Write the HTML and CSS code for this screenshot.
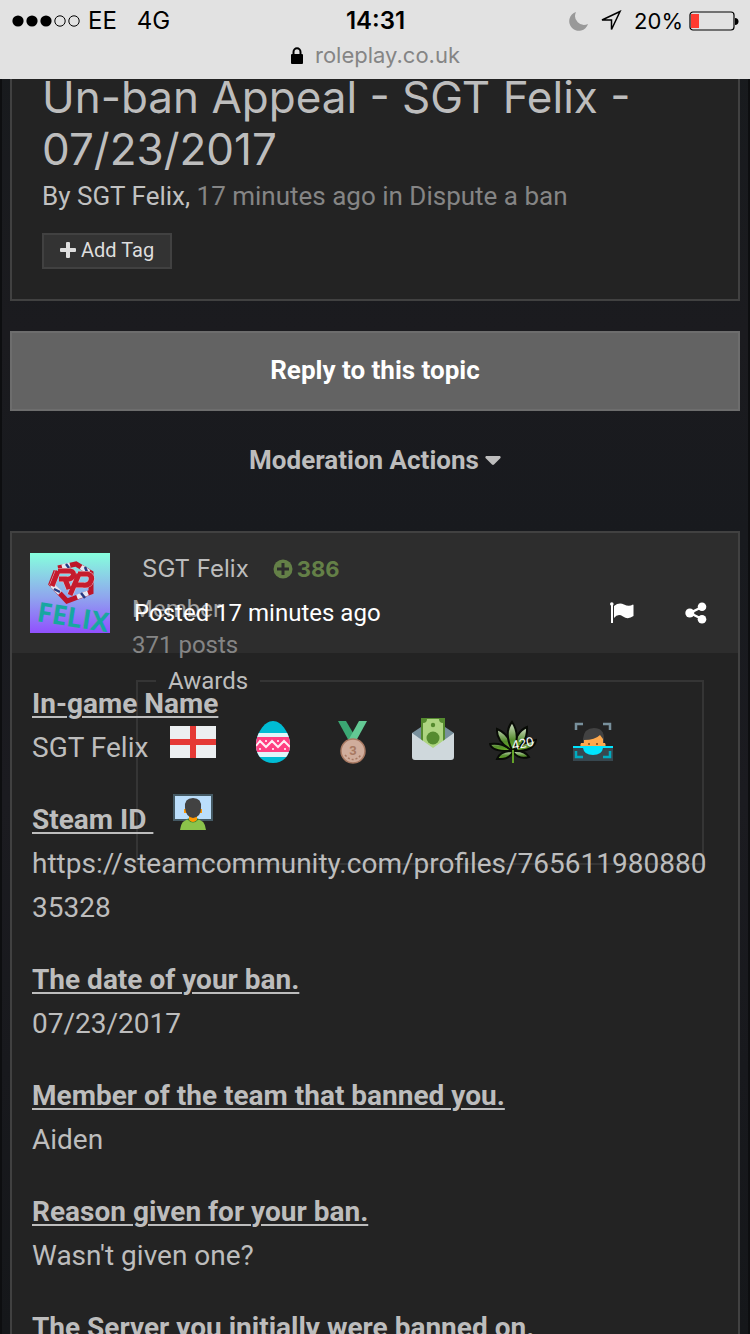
FILE: index.html
```html
<!DOCTYPE html>
<html lang="en">
<head>
    <meta charset="UTF-8">
    <meta name="viewport" content="width=device-width, initial-scale=1.0">
    <title>Un-ban Appeal - SGT Felix - 07/23/2017</title>
    <link rel="stylesheet" href="styles.css">
</head>
<body>
    <header class="phone-bar">
        <div class="status">
            <div class="status-left">
                <svg width="68" height="14" viewBox="0 0 68 14" aria-hidden="true">
                    <circle cx="6" cy="7" r="5.6"/>
                    <circle cx="20" cy="7" r="5.6"/>
                    <circle cx="34" cy="7" r="5.6"/>
                    <g fill="none" stroke="#000" stroke-width="1">
                        <circle cx="48" cy="7" r="5.2"/>
                        <circle cx="62" cy="7" r="5.2"/>
                    </g>
                </svg>
                <span class="carrier">EE</span>
                <span>4G</span>
            </div>
            <div class="time">14:31</div>
            <div class="status-right">
                <svg class="moon" width="20" height="20" viewBox="0 0 20 20" aria-hidden="true">
                    <path d="M7 1A9.6 9.6 0 1 0 19 13A9 9 0 0 1 7 1Z" fill="#999"/>
                </svg>
                <svg class="arrow" width="22" height="22" viewBox="0 0 22 22" aria-hidden="true">
                    <path d="M20 1.5 2 10H11.5V19.5Z" fill="none" stroke="#000" stroke-width="1.5"/>
                </svg>
                <span class="percent">20%</span>
                <svg class="battery" width="50" height="20" viewBox="0 0 50 20" aria-hidden="true">
                    <rect x="1" y="1" width="44" height="18" rx="3" fill="none" stroke="#000" stroke-width="1.2"/>
                    <rect x="2" y="3" width="8" height="14" fill="#ff3b30"/>
                    <path d="M46 7a3 3 0 0 1 0 7Z"/>
                </svg>
            </div>
        </div>
        <div class="address">
            <svg width="12" height="17" viewBox="0 0 12 17" aria-hidden="true">
                <rect y="7" width="12" height="10" rx="1"/>
                <path d="M2.5 8V5a3.5 3.8 0 0 1 7 0V8" fill="none" stroke="#000" stroke-width="2"/>
            </svg>
            <span>roleplay.co.uk</span>
        </div>
    </header>

    <main>
        <section class="card topic">
            <h1>Un-ban Appeal - SGT Felix - 07/23/2017</h1>
            <p class="byline"><a href="#" class="author">By SGT Felix,</a> 17 minutes ago in <a href="#">Dispute a ban</a></p>
            <button type="button" class="add-tag">
                <svg width="16" height="16" viewBox="0 0 16 16" aria-hidden="true">
                    <path d="M6 1q0-1 1-1h2q1 0 1 1v5h5q1 0 1 1v2q0 1-1 1h-5v5q0 1-1 1H7q-1 0-1-1v-5H1q-1 0-1-1V7q0-1 1-1h5Z" fill="currentColor"/>
                </svg>
                Add Tag
            </button>
        </section>

        <button type="button" class="reply">Reply to this topic</button>
        <button type="button" class="moderation">
            Moderation Actions
            <svg width="16" height="9" viewBox="0 0 16 9" aria-hidden="true"><path d="M1 0H15q1 1 .5 2L9 8.5q-1 .8-2 0L.5 2Q0 1 1 0Z" fill="currentColor"/></svg>
        </button>

        <article class="card post">
            <header class="post-header">
                <a href="#" class="avatar" aria-label="SGT Felix">
                    <svg width="80" height="80" viewBox="0 0 80 80" aria-hidden="true">
                        <defs>
                            <linearGradient id="sky" x2="0" y2="1">
                                <stop stop-color="#86ffdd"/>
                                <stop offset=".55" stop-color="#8fa6ee"/>
                                <stop offset="1" stop-color="#9150ff"/>
                            </linearGradient>
                        </defs>
                        <rect width="80" height="80" fill="url(#sky)"/>
                        <path d="M28 15 46 11 61 20 61 39 37 48 21 31 26 18" fill="none" stroke="#bd1529" stroke-width="5"/>
                        <path d="M32 14l8-2M51 14l8 5M22 32l8 8M47 44l11-4" stroke="#e4e8f3" stroke-width="5"/>
                        <path d="M36 11l3 4M55 14l2 5M24 36l6 3M51 40l4 5" stroke="#263982" stroke-width="2.5"/>
                        <g fill="none" stroke-linejoin="round">
                            <path id="letters" d="M28 18H40Q45 19 43 23T36 26H29M28 18 22 33M35 26 39 36M48 21H58Q63 23 61 28T53 32H46M49 21 40 42" stroke="#dec8d5" stroke-width="6"/>
                            <path d="M28 18H40Q45 19 43 23T36 26H29M28 18 22 33M35 26 39 36M48 21H58Q63 23 61 28T53 32H46M49 21 40 42" stroke="#c51b2d" stroke-width="5"/>
                        </g>
                        <text x="6" y="68" transform="rotate(9 6 68)" class="avatar-word">FELIX</text>
                    </svg>
                </a>
                <div class="author-info">
                    <h2><a href="#">SGT Felix</a></h2>
                    <span class="reputation">
                        <svg width="20" height="20" viewBox="0 0 20 20" aria-hidden="true"><circle cx="10" cy="10" r="9.5" fill="#648047"/><path d="M10 4v12M4 10h12" stroke="#2d2d2d" stroke-width="3"/></svg>
                        386
                    </span>
                    <div class="rank">Member</div>
                    <div class="count">371 posts</div>
                </div>
                <a href="#" class="posted">Posted 17 minutes ago</a>
                <a href="#" class="report" aria-label="Report post">
                    <svg width="24" height="22" viewBox="0 0 24 22" aria-hidden="true" fill="#fff">
                        <circle cx="1.8" cy="2" r="1.8"/>
                        <path d="M1 2h2v19H1ZM4 4Q9 0 14 2.5T23 2.5L23.5 3V14Q18 18 13 14.5T4 16Z"/>
                    </svg>
                </a>
                <a href="#" class="share" aria-label="Share post">
                    <svg width="22" height="22" viewBox="0 0 22 22" aria-hidden="true">
                        <path d="M17 5 5 11 17 17" fill="none" stroke="#fff" stroke-width="2.5"/>
                        <g fill="#fff"><circle cx="17" cy="4.8" r="4.3"/><circle cx="4.8" cy="11" r="4.5"/><circle cx="17" cy="17.2" r="4.3"/></g>
                    </svg>
                </a>
            </header>

            <fieldset class="awards">
                <legend>Awards</legend>
                <ul>
                    <!-- England flag -->
                    <li><svg width="48" height="48" viewBox="0 0 48 48"><path d="M1 8h46v32H1Z" fill="#eceff1"/><path d="M21 8h6v13h20v6H27v13h-6V27H1v-6h20Z" fill="#e53935"/></svg></li>
                    <!-- Easter egg -->
                    <li><svg width="48" height="48" viewBox="0 0 48 48">
                        <clipPath id="egg"><path d="M24 3C15 3 7 16 7 27c0 11 7 18 17 18s17-7 17-18C41 16 33 3 24 3Z"/></clipPath>
                        <g clip-path="url(#egg)">
                            <path d="M6 2h36v44H6Z" fill="#00bcd4"/>
                            <path d="M6 15h36v24H6Z" fill="#e1f5f9"/>
                            <path d="M6 19h36v15H6Z" fill="#ff4081"/>
                            <path d="M7 28l4-5 6 6 6-6 6 6 6-6 6 6" fill="none" stroke="#fff0f5" stroke-width="2"/>
                            <path d="M16 22h2v2h-2Zm12 0h2v2h-2ZM10 30h2v2h-2Zm13 0h2v2h-2Zm12 0h2v2h-2Z" fill="#ffd0e0"/>
                        </g>
                    </svg></li>
                    <!-- Bronze medal -->
                    <li><svg width="48" height="48" viewBox="0 0 48 48">
                        <path d="M9 3h8l10 17-6 5Z" fill="#3ba773"/>
                        <path d="M30 3h8L27 23l-7-2Z" fill="#63c994"/>
                        <circle cx="24" cy="33" r="12" fill="#d0ad9c" stroke="#a87962" stroke-width="1.5"/>
                        <path d="M16 37q8 9 16 0" fill="none" stroke="#a87962" stroke-dasharray="2 2" stroke-width="1.5"/>
                        <text x="24" y="37" text-anchor="middle" class="medal-number">3</text>
                    </svg></li>
                    <!-- Money in envelope -->
                    <li><svg width="48" height="48" viewBox="0 0 48 48">
                        <path d="M3 15 24 1l21 14v15H3Z" fill="#78909c"/>
                        <path d="M12-1h24v34H12Z" fill="#558b2f"/>
                        <path d="M18 1h12q0 4 4 4v28H14V5q4 0 4-4Z" fill="#aed581"/>
                        <circle cx="24" cy="7" r="2.2" fill="#558b2f"/><circle cx="24" cy="20" r="6.5" fill="#558b2f"/>
                        <path d="M3 15 24 30 45 15V39q0 3-3 3H6q-3 0-3-3Z" fill="#cfd8dc"/>
                    </svg></li>
                    <!-- Leaf -->
                    <li><svg width="48" height="48" viewBox="0 0 48 48">
                        <defs><linearGradient id="leaf" x2="0" y2="1"><stop stop-color="#d5e2cc"/><stop offset=".6" stop-color="#548b2c"/><stop offset="1" stop-color="#75bd24"/></linearGradient></defs>
                        <g fill="url(#leaf)" stroke="#080b06" stroke-width="2">
                            <path d="M24 33Q3 34 1 26 13 24 24 33ZM24 33Q45 34 47 22 34 24 24 33Z"/>
                            <path d="M24 33Q7 24 8 11 21 16 24 33ZM24 33Q39 25 38 9 26 14 24 33Z"/>
                            <path d="M24 34Q14 15 23 4 32 17 24 34Z"/>
                            <path d="M24 33Q11 33 8 41 20 42 24 34 30 42 40 39 36 32 24 33Z"/>
                        </g>
                        <path d="M24 32v13" stroke="#64a32a" stroke-width="2"/>
                        <text x="24" y="32" transform="rotate(-12 24 32)" class="leaf-number">420</text>
                    </svg></li>
                    <!-- Face scan -->
                    <li><svg width="48" height="48" viewBox="0 0 48 48">
                        <path d="M4 30h40v13H4Z" fill="#37474f"/>
                        <path d="M14 26V21Q15 10 25 10t10 11v5Z" fill="#424242"/>
                        <path d="M12 25h3v-3q11 0 16-5l3 4v4h2q2 4-2 4-9 12-20 0-4 0-2-4Z" fill="#ffa94d"/>
                        <circle cx="20" cy="26" r="1" fill="#784719"/><circle cx="28" cy="26" r="1" fill="#784719"/>
                        <path d="M4 28h40v2H34q-1 7-10 7T14 30H4Z" fill="#00e5ff"/>
                        <path d="M7 12V6h7M34 6h7v6" fill="none" stroke="#78909c" stroke-width="2.5"/>
                        <path d="M7 33v6h7M34 39h7v-6" fill="none" stroke="#00acc1" stroke-width="2.5"/>
                    </svg></li>
                    <!-- Person on screen -->
                    <li><svg width="48" height="48" viewBox="0 0 48 48">
                        <path d="M4 6h40v27H4Z" fill="#455a64"/>
                        <path d="M6 8h36v23H6Z" fill="#bbdefb"/>
                        <path d="M11 42q1-11 11-11h4q10 0 11 11Z" fill="#8bc34a"/>
                        <path d="M18 31q6 7 12 0l-3-1h-6Z" fill="#2e7d32"/>
                        <path d="M20 27h8v5q-4 4-8 0ZM15 21h18v4H15Z" fill="#ff9800"/>
                        <path d="M16 20q-1-10 8-10t8 10q0 9-8 10-7-1-8-10Z" fill="#424242"/>
                    </svg></li>
                </ul>
            </fieldset>

            <div class="post-body">
                <p><strong>In-game Name</strong><br>SGT Felix</p>
                <p><strong>Steam ID&nbsp;</strong><br>https://steamcommunity.com/profiles/76561198088035328</p>
                <p><strong>The date of your ban.</strong><br>07/23/2017</p>
                <p><strong>Member of the team that banned you.</strong><br>Aiden</p>
                <p><strong>Reason given for your ban.</strong><br>Wasn't given one?</p>
                <p><strong>The Server you initially were banned on.</strong></p>
            </div>
        </article>
    </main>
</body>
</html>
```
FILE: styles.css
```css
* {
    box-sizing: border-box;
}

body {
    margin: 0;
    height: 100vh;
    overflow: hidden;
    background: linear-gradient(#171a1d, #1b1b1f 25%, #181a1e 40%, #1b1b20 60%, #15171a);
    border: solid #0d0e10;
    border-width: 0 2px;
    color: #bdbdbd;
    font-family: Roboto, sans-serif;
}

a {
    color: inherit;
    text-decoration: none;
}

button {
    font-family: inherit;
    cursor: pointer;
}

/* browser bar */
.phone-bar {
    position: fixed;
    z-index: 5;
    top: 0;
    left: 0;
    right: 0;
    height: 79px;
    padding: 6px 11px 0 12px;
    background-color: #e2e2e2;
    color: #000;
    font-family: Inter, sans-serif;
    font-size: 24px;
}

.status {
    display: grid;
    grid-template-columns: 1fr auto 1fr;
    align-items: center;
    line-height: 30px;
}

.status-left,
.status-right {
    display: flex;
    align-items: center;
}

.status-right {
    justify-content: flex-end;
}

.carrier {
    margin: 0 20px 0 8px;
}

.time {
    font-weight: 600;
}

.moon {
    margin-right: 11px;
}

.arrow {
    margin-right: 12px;
}

.percent {
    font-size: 22px;
}

.battery {
    margin-left: 6px;
}

.address {
    display: flex;
    justify-content: center;
    align-items: center;
    gap: 12px;
    line-height: 38px;
    color: #858585;
    font-size: 22px;
}

/* topic */
main {
    padding: 69px 8px 0;
}

.card {
    background-color: #232323;
    border: 2px solid #414141;
}

.topic {
    padding: 0 30px 30px;
}

h1 {
    margin: 0 0 2px;
    font-family: Inter, sans-serif;
    font-size: 44px;
    font-weight: 400;
    line-height: 52px;
}

.byline {
    margin: 0 0 18px;
    color: #858585;
    font-size: 26px;
    line-height: 38px;
}

.author {
    color: #c1c1c1;
}

.add-tag {
    display: flex;
    align-items: center;
    gap: 5px;
    height: 36px;
    padding: 0 16px 2px;
    background-color: #333;
    border: 2px solid #414141;
    color: #dedede;
    font-size: 20px;
}

.reply,
.moderation {
    display: block;
    width: 100%;
    padding-bottom: 3px;
    font-size: 26px;
    font-weight: 700;
}

.reply {
    height: 80px;
    margin: 30px 0 20px;
    background-color: #636363;
    border: 2px solid #6d6d6d;
    color: #fff;
}

.moderation {
    display: flex;
    justify-content: center;
    align-items: center;
    gap: 6px;
    height: 60px;
    margin-bottom: 40px;
    background: none;
    border: 0;
    color: #bdbdbd;
}

/* post */
.post {
    position: relative;
}

.post-header {
    display: flex;
    align-items: center;
    height: 120px;
    padding: 0 31px 0 18px;
    background-color: #2d2d2d;
}

.avatar svg {
    display: block;
}

.avatar-word {
    fill: #18a7a0;
    font: bold 27px "Liberation Sans Narrow", "Open Sans", sans-serif;
}

.author-info {
    position: absolute;
    top: 20px;
    left: 120px;
    display: grid;
    grid-template-columns: auto auto;
    column-gap: 24px;
    color: #858585;
    font-size: 24px;
}

h2 {
    margin: 0 0 0 10px;
    color: #bdbdbd;
    font-family: Inter, sans-serif;
    font-size: 24px;
    font-weight: 400;
    line-height: 32px;
}

.reputation {
    display: flex;
    align-items: center;
    gap: 4px;
    color: #648047;
    font-family: Inter, sans-serif;
    font-size: 22px;
    font-weight: 700;
}

.rank,
.count {
    grid-column: 1 / 3;
    line-height: 36px;
}

.rank {
    margin-top: 6px;
    color: #a0a0a0;
}

.posted {
    position: relative;
    margin: 40px auto 0 24px;
    color: #fff;
    font-size: 24px;
    line-height: 40px;
}

.report,
.share {
    display: flex;
    margin-top: 40px;
}

.report {
    margin-right: 51px;
}

.awards {
    position: absolute;
    top: 134px;
    left: 124px;
    right: 34px;
    height: 198px;
    margin: 0;
    padding: 23px 14px 0 15px;
    border: 2px solid #353535;
    font-size: 24px;
}

.awards legend {
    margin-left: 3px;
    padding: 0 12px;
    line-height: 28px;
}

.awards ul {
    display: flex;
    flex-wrap: wrap;
    margin: 0;
    padding: 0;
    list-style: none;
}

.awards li {
    display: flex;
    justify-content: center;
    width: 80px;
    height: 70px;
}

.medal-number {
    fill: #a87962;
    font: bold 13px Roboto, sans-serif;
}

.leaf-number {
    fill: #fff;
    font: 13px "Liberation Sans", sans-serif;
}

.post-body {
    position: relative;
    padding: 29px 20px 30px;
    font-size: 28px;
    line-height: 44px;
    overflow-wrap: anywhere;
}

.post-body p {
    margin: 0 0 28px;
}

.post-body strong {
    text-decoration: underline;
    text-decoration-thickness: 2px;
    text-underline-offset: 3px;
}
```
